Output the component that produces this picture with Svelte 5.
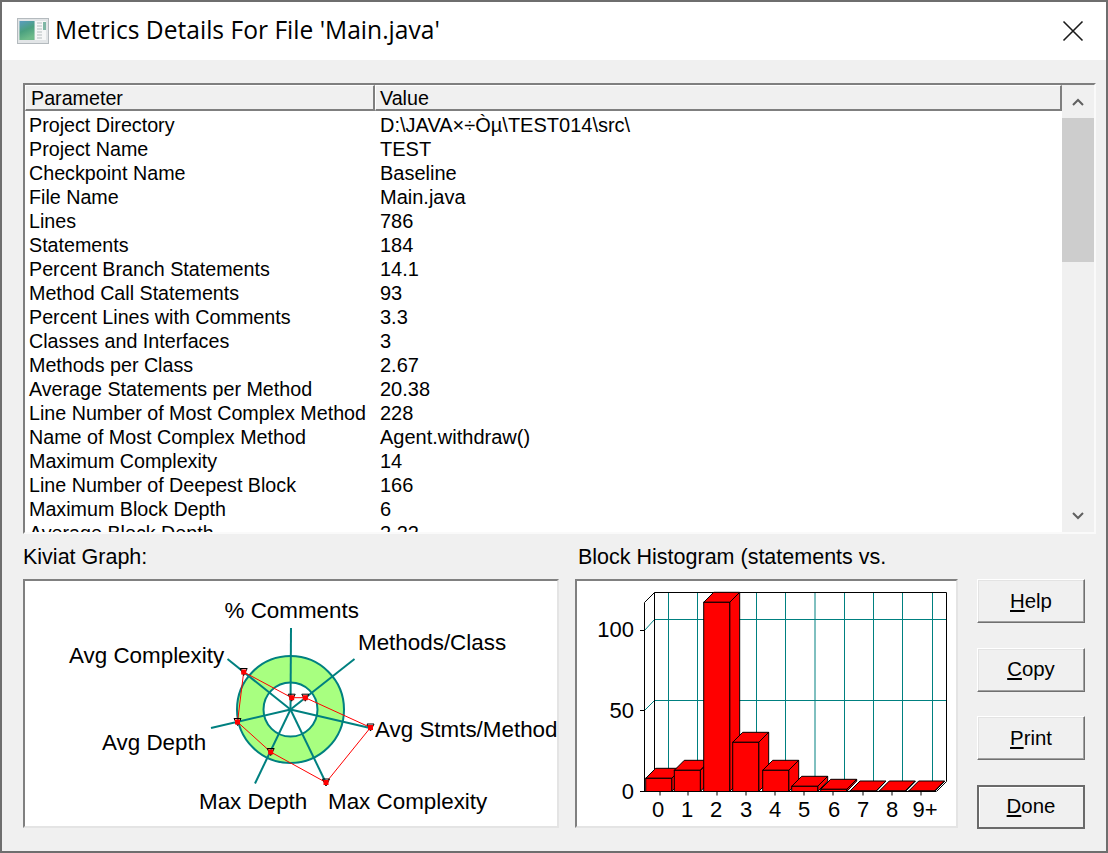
<script>
  const rows = [
    ['Project Directory', 'D:\\JAVA×÷Òµ\\TEST014\\src\\'],
    ['Project Name', 'TEST'],
    ['Checkpoint Name', 'Baseline'],
    ['File Name', 'Main.java'],
    ['Lines', '786'],
    ['Statements', '184'],
    ['Percent Branch Statements', '14.1'],
    ['Method Call Statements', '93'],
    ['Percent Lines with Comments', '3.3'],
    ['Classes and Interfaces', '3'],
    ['Methods per Class', '2.67'],
    ['Average Statements per Method', '20.38'],
    ['Line Number of Most Complex Method', '228'],
    ['Name of Most Complex Method', 'Agent.withdraw()'],
    ['Maximum Complexity', '14'],
    ['Line Number of Deepest Block', '166'],
    ['Maximum Block Depth', '6'],
    ['Average Block Depth', '2.22']
  ];
  const cx = 290.5, cy = 709.5;
  const ox = 23, oy = 579;
  const spokes = [[291,628],[354.5,659],[370,728],[326,783],[255,783.5],[211,728],[227.5,659]];
  const poly = [[291.7,697.7],[305.3,697.7],[370.5,727.5],[326,782.5],[270.7,752],[237.5,722],[243.7,672]];
  const kLabels = [
    ['% Comments', 224.5, 618],['Methods/Class', 358, 650],['Avg Stmts/Method', 375, 737],
    ['Max Complexity', 328, 809],['Max Depth', 199, 809],['Avg Depth', 102, 750],['Avg Complexity', 69, 663]
  ];
  const hx = 575, hy = 579;
  const vlines = [668.5,697.5,727,756.5,785.5,815,844.5,873.5,902.5,932.5];
  const bars = [
    [645.7,778.3],[674.3,770.3],[703.7,602.3],[732.7,742.3],[762.7,770.3],
    [791.7,786.3],[820.7,789.3],[850,791],[879.3,791],[908.7,791]
  ];
  const xl = [['0',658],['1',687],['2',716],['3',746],['4',775],['5',804],['6',834],['7',863],['8',892],['9+',925]];
  const buttons = [['H','elp'],['C','opy'],['P','rint'],['D','one']];
</script>

<div class="window">
  <header class="title">
    <svg class="icon" width="32" height="26" viewBox="0 0 32 26">
      <defs>
        <linearGradient id="ig" x1="0" y1="0" x2="0.35" y2="1">
          <stop offset="0" stop-color="#5a9cc0"/>
          <stop offset="0.55" stop-color="#4aa07f"/>
          <stop offset="1" stop-color="#6fbb8a"/>
        </linearGradient>
      </defs>
      <rect x="0.5" y="0.5" width="31" height="25" fill="#e2e5e7" stroke="#b4babe"/>
      <rect x="2.5" y="3" width="15" height="19" fill="url(#ig)"/>
      <rect x="18" y="3" width="11" height="19" fill="#f6f7f7"/>
      <path d="M20 5h5M20 8h5M20 11h5M20 14h5M20 17h5M20 20h5" stroke="#b5bdbf" stroke-width="1"/>
      <rect x="26" y="4" width="3" height="8" fill="#7fb6a4"/>
    </svg>
    <h1>Metrics Details For File 'Main.java'</h1>
    <svg class="close" width="22" height="22" viewBox="0 0 22 22">
      <path d="M1.5 1.5L20.5 20.5M20.5 1.5L1.5 20.5" stroke="#1a1a1a" stroke-width="1.6" fill="none"/>
    </svg>
  </header>

  <main class="body">
    <section class="list">
      <div class="table">
        <div class="thead">
          <div class="th th1">Parameter</div>
          <div class="th th2">Value</div>
        </div>
        <div class="rows">
          {#each rows as r}
            <div class="row"><span class="p">{r[0]}</span><span class="v">{r[1]}</span></div>
          {/each}
        </div>
      </div>
      <div class="scroll">
        <div class="arrow up">
          <svg width="12" height="8" viewBox="0 0 12 8"><path d="M1 7L6 2L11 7" fill="none" stroke="#606060" stroke-width="2"/></svg>
        </div>
        <div class="thumb"></div>
        <div class="track"></div>
        <div class="arrow down">
          <svg width="12" height="8" viewBox="0 0 12 8"><path d="M1 1L6 6L11 1" fill="none" stroke="#606060" stroke-width="2"/></svg>
        </div>
      </div>
    </section>

    <section class="lower">
      <div class="kiviat">
        <div class="label">Kiviat Graph:</div>
        <div class="panel kpanel">
          <svg width="536" height="249" viewBox="{ox} {oy} 536 249">
            <circle cx={cx} cy={cy} r="53.5" fill="#a8ff80" stroke="#008080" stroke-width="2"/>
            <circle cx={cx} cy={cy} r="27" fill="#fff" stroke="#008080" stroke-width="2"/>
            {#each spokes as s}
              <line x1={cx} y1={cy} x2={s[0]} y2={s[1]} stroke="#008080" stroke-width="2"/>
            {/each}
            <polygon points={poly.map((p) => p.join(',')).join(' ')} fill="none" stroke="#ff0000" stroke-width="1"/>
            {#each poly as p}
              <path d="M{p[0]-3.5} {p[1]-3.5}h7M{p[0]-3.5} {p[1]-3.5}l3.5 7l3.5 -7" stroke="#000" stroke-width="1" fill="none"/>
              <rect x={p[0]-2.5} y={p[1]-2.5} width="5" height="5" fill="#ff0000"/>
            {/each}
            {#each kLabels as l}
              <text x={l[1]} y={l[2]} class="ct">{l[0]}</text>
            {/each}
          </svg>
        </div>
      </div>

      <div class="hist">
        <div class="label">Block Histogram (statements vs.</div>
        <div class="panel hpanel">
          <svg width="383" height="249" viewBox="{hx} {hy} 383 249">
            {#each vlines as x}
              <line x1={x} y1="592.5" x2={x} y2="781" stroke="#008080"/>
            {/each}
            <path d="M654.5 619.5H946.5M654.5 700.5H946.5" stroke="#008080"/>
            <path d="M644.5 630.5L654.5 619.5M644.5 710.5L654.5 700.5" stroke="#008080"/>
            <path d="M644.5 791V602.5L654.5 592.5H946.5V781.5L936.5 791.5M654.5 592.5V781.5" fill="none" stroke="#000"/>
            <path d="M640 630.5H644.5M640 710.5H644.5M640 791.5H936M660 791.5v4M688 791.5v4M717 791.5v4M746 791.5v4M775 791.5v4M804 791.5v4M833 791.5v4M863 791.5v4M892 791.5v4M921 791.5v4" stroke="#000"/>
            {#each bars as b}
              <path d="M{b[0]} {b[1]}l10 -10h26l-10 10zM{b[0]+26} {b[1]}l10 -10V781l-10 10.5z" fill="#ff0000" stroke="#000"/>
              <rect x={b[0]} y={b[1]} width="26" height={791.5 - b[1]} fill="#ff0000" stroke="#000"/>
            {/each}
            <text x="634" y="637" text-anchor="end" class="ct axis">100</text>
            <text x="634" y="718" text-anchor="end" class="ct axis">50</text>
            <text x="634" y="799" text-anchor="end" class="ct axis">0</text>
            {#each xl as l}
              <text x={l[1]} y="817" text-anchor="middle" class="ct axis">{l[0]}</text>
            {/each}
          </svg>
        </div>
      </div>

      <div class="buttons">
        {#each buttons as b, i}
          <button class:def={i === 3}><u>{b[0]}</u>{b[1]}</button>
        {/each}
      </div>
    </section>
  </main>
</div>

<style>
  :global(body) {
    margin: 0;
    background: #f0f0f0;
  }
  .window {
    width: 1108px;
    height: 853px;
    box-sizing: border-box;
    border: 2px solid #6e6e6e;
    background: #f0f0f0;
    display: flex;
    flex-direction: column;
    font-family: "Liberation Sans", Arial, sans-serif;
    font-size: 19.7px;
    color: #000;
    overflow: hidden;
  }
  .title {
    height: 58px;
    background: #fff;
    display: flex;
    align-items: center;
    padding: 0 22px 0 15px;
    flex: none;
  }
  .icon { flex: none; }
  h1 {
    flex: 1;
    margin: 0 0 2px 6px;
    font-family: "Open Sans", "Noto Sans", sans-serif;
    font-weight: 400;
    font-size: 24.6px;
    line-height: 56px;
  }
  .close { flex: none; margin-bottom: 1px; }
  .body {
    flex: 1;
    padding: 23px 10px 0 21px;
    display: flex;
    flex-direction: column;
    min-height: 0;
  }
  .list {
    height: 451px;
    box-sizing: border-box;
    display: flex;
    background: #fff;
    border-top: 2px solid #7f7f7f;
    border-left: 2px solid #7f7f7f;
    border-right: 2px solid #fafafa;
    border-bottom: 2px solid #fafafa;
    flex: none;
    width: 1073px;
    overflow: hidden;
  }
  .table { flex: 1; min-width: 0; }
  .thead {
    display: flex;
    height: 26px;
    background: #f0f0f0;
    box-sizing: border-box;
  }
  .th {
    box-sizing: border-box;
    border-top: 1px solid #fff;
    border-left: 1px solid #fff;
    border-right: 2px solid #7f7f7f;
    border-bottom: 2px solid #7f7f7f;
    line-height: 25px;
    padding-left: 5px;
  }
  .th1 { width: 350px; }
  .th2 { flex: 1; padding-left: 4px; }
  .rows { padding-left: 4px; padding-top: 2px; }
  .row {
    display: flex;
    height: 24px;
    line-height: 24px;
    white-space: nowrap;
  }
  .p { width: 351px; flex: none; }
  .v { font-size: 20px; }
  .scroll {
    width: 32px;
    flex: none;
    background: #f0f0f0;
    display: flex;
    flex-direction: column;
  }
  .arrow {
    height: 33px;
    display: flex;
    align-items: center;
    justify-content: center;
    flex: none;
  }
  .thumb { height: 144px; background: #cdcdcd; flex: none; }
  .track { flex: 1; }
  .lower {
    flex: 1;
    display: flex;
    min-height: 0;
  }
  .label {
    height: 45px;
    line-height: 47px;
    white-space: nowrap;
    box-sizing: border-box;
    font-size: 21.5px;
  }
  .kiviat { width: 536px; flex: none; margin-right: 16px; }
  .hist { width: 383px; flex: none; margin-right: 19px; }
  .hist .label { padding-left: 3px; }
  .panel {
    height: 249px;
    box-sizing: border-box;
    background: #fff;
    position: relative;
    overflow: hidden;
  }
  .panel::after {
    content: "";
    position: absolute;
    inset: 0;
    border-top: 2px solid #808080;
    border-left: 2px solid #808080;
    border-right: 2px solid #e4e4e4;
    border-bottom: 2px solid #e4e4e4;
    pointer-events: none;
  }
  .panel svg { display: block; }
  .ct {
    font-family: "Liberation Sans", Arial, sans-serif;
    font-size: 22.4px;
    fill: #000;
  }
  .ct.axis { font-size: 22px; }
  .buttons {
    width: 108px;
    flex: none;
    padding-top: 45px;
    display: flex;
    flex-direction: column;
    gap: 24.67px;
  }
  button {
    width: 108px;
    height: 44px;
    flex: none;
    padding: 0;
    background: #f0f0f0;
    font: inherit;
    font-size: 20.4px;
    color: #000;
    box-sizing: border-box;
    border: 1px solid;
    border-color: #fff #707070 #707070 #fff;
    box-shadow: inset -1px -1px 0 #a0a0a0, inset 1px 1px 0 #e3e3e3;
  }
  button.def {
    border: 2px solid #6a6a6a;
    box-shadow: inset 1px 1px 0 #fff;
  }
</style>
